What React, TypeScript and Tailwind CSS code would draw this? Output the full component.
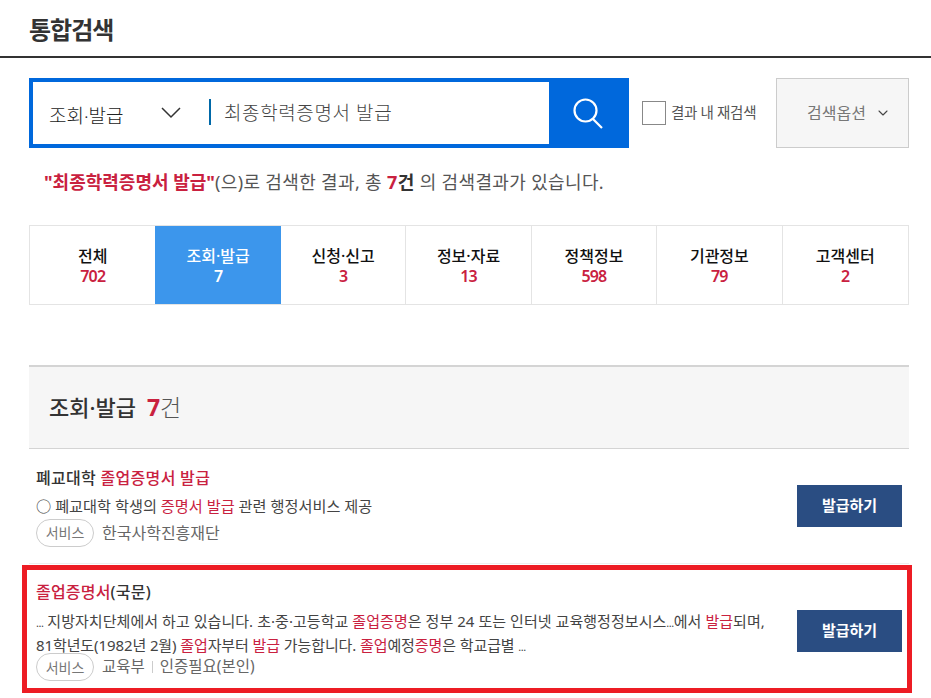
import { ChevronDown } from "lucide-react";

const tabs = [
  { name: "전체", count: "702" },
  { name: "조회·발급", count: "7", active: true },
  { name: "신청·신고", count: "3" },
  { name: "정보·자료", count: "13" },
  { name: "정책정보", count: "598" },
  { name: "기관정보", count: "79" },
  { name: "고객센터", count: "2" },
];

function Hl({ children }: { children: React.ReactNode }) {
  return <span className="text-[#c9213f]">{children}</span>;
}

function Dots() {
  return <span className="text-[11px] tracking-[-0.5px]">...</span>;
}

function IssueButton({ className = "" }: { className?: string }) {
  return (
    <button className={"w-[105px] h-[42px] shrink-0 bg-[#2a4d82] text-white text-[15px] font-bold " + className}>
      발급하기
    </button>
  );
}

function ServiceTag() {
  return (
    <span className="w-[58px] h-[28px] shrink-0 flex items-center justify-center rounded-full border border-[#cccccc] text-[14px] text-[#777777]">
      서비스
    </span>
  );
}

export default function App() {
  return (
    <div
      className="relative w-[931px] h-[698px] overflow-hidden bg-white text-[#333333]"
      style={{ fontFamily: '"Noto Sans", "Noto Sans CJK KR", sans-serif' }}
    >
      <div className="pl-[29px] border-b-2 border-[#333333] h-[58px]">
        <h1 className="pt-[12px] text-[24px] leading-[36px] font-bold tracking-[-1px] text-[#333333]">통합검색</h1>
      </div>

      <div className="ml-[29px] w-[880px] mt-[20px] flex items-center">
        <div className="w-[600px] h-[70px] flex border-[4px] border-r-0 border-[#0068dc]">
          <div className="w-[176px] flex items-center justify-between pl-[16px] pr-[27px] mt-[6px] text-[19px] font-light text-[#222222]">
            <span>조회·발급</span>
            <svg width="22" height="12" viewBox="0 0 22 12" fill="none" className="-mt-[7px]">
              <path d="M2 1l9 9 9-9" stroke="#333333" strokeWidth="1.5" />
            </svg>
          </div>
          <div className="flex-1 flex items-center">
            <div className="w-[2px] h-[26px] bg-[#0068a8] -mt-[2px]" />
            <span className="ml-[13px] text-[19px] font-light tracking-[0.6px] text-[#444444]">최종학력증명서 발급</span>
          </div>
          <div className="w-[80px] bg-[#0068dc] flex items-center justify-center pr-[2px]">
            <svg width="32" height="32" viewBox="0 0 32 32" fill="none">
              <circle cx="13.5" cy="13.5" r="11" stroke="white" strokeWidth="2.2" />
              <path d="M21 22l9 9" stroke="white" strokeWidth="2.2" />
            </svg>
          </div>
        </div>
        <span className="ml-[13px] w-[24px] h-[24px] border border-[#888888] bg-white" />
        <span className="ml-[5px] text-[14.5px] tracking-[-0.3px] text-[#555555]">결과 내 재검색</span>
        <div className="ml-auto w-[133px] h-[70px] flex items-center pl-[30px] gap-[9px] bg-[#f6f6f6] border border-[#cccccc] text-[16px] text-[#777777]">
          <span>검색옵션</span>
          <ChevronDown size={16} strokeWidth={1.6} className="text-[#444444]" />
        </div>
      </div>

      <p className="ml-[44px] mt-[22px] h-[24px] text-[18px] leading-[24px] text-[#555555] tracking-[0.35px] whitespace-nowrap">
        <b className="text-[#c9213f] tracking-normal">"최종학력증명서 발급"</b>(으)로 검색한 결과, 총{" "}
        <b className="text-[#c9213f]">7</b>
        <b className="text-[#333333]">건</b> 의 검색결과가 있습니다.
      </p>

      <div className="ml-[29px] mt-[31px] w-[880px] h-[80px] grid grid-cols-7 border border-[#e4e4e4]">
        {tabs.map((t, i) => (
          <div
            key={t.name}
            className={
              "flex flex-col items-center justify-center pt-[2px] text-[16px] leading-[20px] font-medium " +
              (t.active ? "bg-[#3c96ec] text-white " : "text-[#111111] ") +
              (i < 6 && !t.active && i !== 0 ? "border-r border-[#e4e4e4]" : "")
            }
          >
            <span>{t.name}</span>
            <span className={"tracking-[-0.8px] font-semibold " + (t.active ? "text-white" : "text-[#c9213f]")}>{t.count}</span>
          </div>
        ))}
      </div>

      <div className="ml-[29px] mt-[60px] w-[880px] h-[84px] flex items-center pl-[20px] bg-[#f6f6f6] border-t-2 border-b border-[#d4d4d4]">
        <span className="text-[22px] font-medium text-[#333333]">조회·발급</span>
        <span className="ml-[11px] text-[23px]">
          <b className="text-[#c9213f]">7</b>
          <span className="font-light text-[#555555]">건</span>
        </span>
      </div>

      <div className="ml-[29px] w-[880px] h-[115px] flex items-center pl-[7px] pr-[7px] border-b border-[#eeeeee]">
        <div className="flex-1 min-w-0">
          <div className="pb-[3px] text-[16px] tracking-[0.3px] leading-[24px] font-medium text-[#333333]">
            폐교대학 <Hl>졸업증명서 발급</Hl>
          </div>
          <div className="text-[15.2px] leading-[26px] text-[#444444]">
            ○ 폐교대학 학생의 <Hl>증명서 발급</Hl> 관련 행정서비스 제공
          </div>
          <div className="flex items-center gap-[8px] text-[16px] text-[#666666]">
            <ServiceTag />
            <span>한국사학진흥재단</span>
          </div>
        </div>
        <IssueButton className="-mt-[1px]" />
      </div>

      <div className="ml-[29px] w-[880px] h-[133px] flex items-center pl-[7px] pr-[7px]">
        <div className="flex-1 min-w-0">
          <div className="pb-[6px] text-[16px] tracking-[0.2px] leading-[24px] font-medium text-[#333333]">
            <Hl>졸업증명서</Hl>(국문)
          </div>
          <div className="text-[15px] leading-[23px] text-[#444444] whitespace-nowrap">
            <div className="tracking-[0.05px]">
              <Dots /> 지방자치단체에서 하고 있습니다. 초·중·고등학교 <Hl>졸업증명</Hl>은 정부 24 또는 인터넷 교육행정정보시스<Dots />에서 <Hl>발급</Hl>되며,
            </div>
            <div className="tracking-[-0.1px]">
              81학년도(1982년 2월) <Hl>졸업</Hl>자부터 <Hl>발급</Hl> 가능합니다. <Hl>졸업</Hl>예정<Hl>증명</Hl>은 학교급별 <Dots />
            </div>
          </div>
          <div className="-mt-[5px] flex items-center text-[15.5px] text-[#666666]">
            <ServiceTag />
            <span className="ml-[8px]">교육부</span>
            <span className="mx-[7px] w-px h-[12px] bg-[#cccccc]" />
            <span>인증필요(본인)</span>
          </div>
        </div>
        <IssueButton />
      </div>

      <div className="absolute left-[22px] top-[565px] w-[890px] h-[128px] border-[5px] border-[#ed1c24] pointer-events-none" />
    </div>
  );
}
